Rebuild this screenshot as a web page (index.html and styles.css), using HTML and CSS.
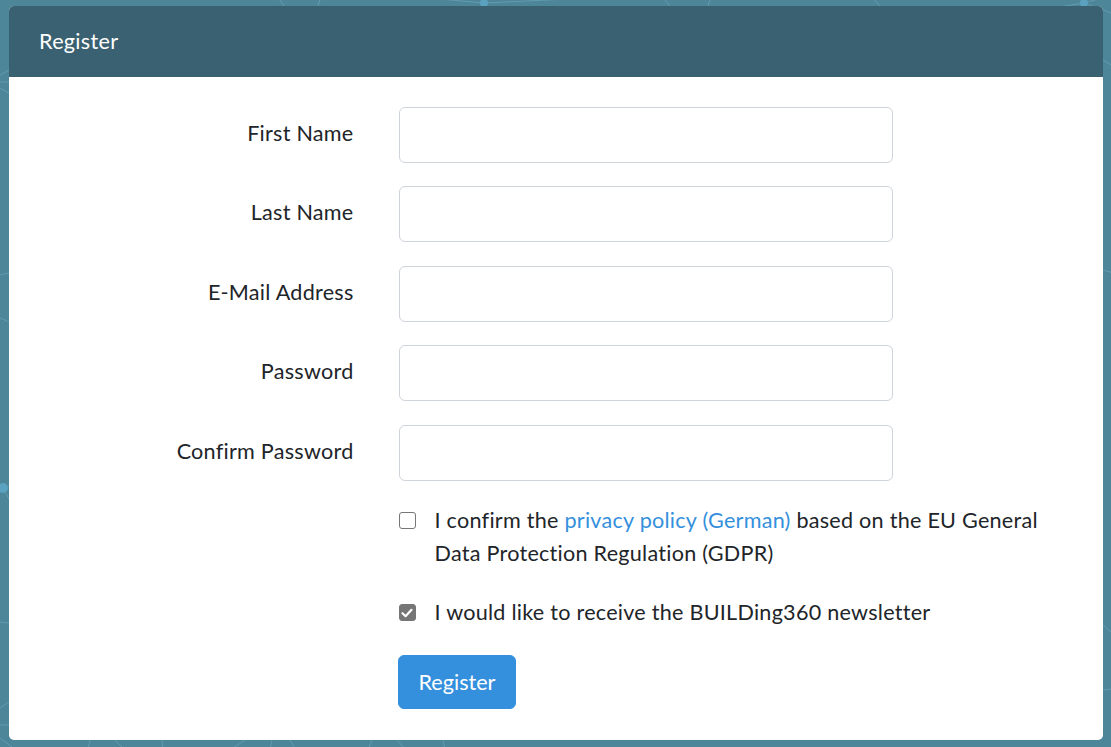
FILE: index.html
```html
<!DOCTYPE html>
<html lang="en">
<head>
<meta charset="utf-8">
<title>Register</title>
<link rel="stylesheet" href="styles.css">
</head>
<body>
<svg class="network" width="1111" height="747" viewBox="0 0 1111 747" aria-hidden="true">
  <g stroke="#6aa6bb" stroke-width="1" fill="none" opacity="0.7">
    <line x1="484" y1="3" x2="230" y2="-20"/>
    <line x1="484" y1="3" x2="760" y2="-10"/>
    <line x1="284" y1="6" x2="260" y2="-30"/>
    <line x1="318" y1="6" x2="330" y2="-30"/>
    <line x1="670" y1="6" x2="640" y2="-30"/>
    <line x1="708" y1="6" x2="720" y2="-30"/>
    <line x1="880" y1="6" x2="850" y2="-30"/>
    <line x1="1084" y1="3" x2="1040" y2="10"/>
    <line x1="1084" y1="3" x2="1130" y2="-10"/>
    <line x1="1084" y1="3" x2="1130" y2="20"/>
    <line x1="3" y1="488" x2="-20" y2="460"/>
    <line x1="3" y1="488" x2="30" y2="480"/>
    <line x1="3" y1="488" x2="20" y2="520"/>
    <line x1="0" y1="75" x2="9" y2="70"/>
    <line x1="0" y1="82" x2="9" y2="82"/>
    <line x1="0" y1="88" x2="9" y2="93"/>
    <line x1="0" y1="275" x2="9" y2="273"/>
    <line x1="0" y1="318" x2="9" y2="322"/>
    <line x1="0" y1="622" x2="9" y2="623"/>
    <line x1="0" y1="708" x2="9" y2="702"/>
    <line x1="0" y1="725" x2="9" y2="725"/>
    <line x1="0" y1="738" x2="12" y2="747"/>
    <line x1="88" y1="750" x2="90" y2="740"/>
    <line x1="115" y1="740" x2="125" y2="750"/>
    <line x1="162" y1="740" x2="163" y2="750"/>
    <line x1="245" y1="740" x2="230" y2="750"/>
    <line x1="272" y1="740" x2="270" y2="750"/>
    <line x1="290" y1="740" x2="296" y2="750"/>
    <line x1="372" y1="740" x2="368" y2="750"/>
    <line x1="397" y1="740" x2="406" y2="750"/>
    <line x1="443" y1="740" x2="445" y2="750"/>
    <line x1="1103" y1="60" x2="1120" y2="70"/>
    <line x1="1103" y1="270" x2="1120" y2="275"/>
    <line x1="1103" y1="625" x2="1120" y2="640"/>
    <line x1="1103" y1="690" x2="1120" y2="688"/>
  </g>
  <g fill="#5aa2c0">
    <circle cx="484" cy="3" r="4"/>
    <circle cx="1084" cy="3" r="4"/>
    <circle cx="3" cy="488" r="5"/>
  </g>
</svg>

<main class="page">
  <section class="card">
    <header class="card-header">Register</header>
    <div class="card-body">
      <form class="form" onsubmit="return false">
        <div class="row">
          <label class="col-label" for="first">First Name</label>
          <div class="col-field"><input id="first" class="input" type="text"></div>
        </div>
        <div class="row">
          <label class="col-label" for="last">Last Name</label>
          <div class="col-field"><input id="last" class="input" type="text"></div>
        </div>
        <div class="row">
          <label class="col-label" for="email">E-Mail Address</label>
          <div class="col-field"><input id="email" class="input" type="email"></div>
        </div>
        <div class="row">
          <label class="col-label" for="pw">Password</label>
          <div class="col-field"><input id="pw" class="input" type="password"></div>
        </div>
        <div class="row">
          <label class="col-label" for="pw2">Confirm Password</label>
          <div class="col-field"><input id="pw2" class="input" type="password"></div>
        </div>
        <div class="row">
          <div class="col-offset">
            <label class="check">
              <span class="box"></span>
              <span class="check-text">I confirm the <a href="#" class="link">privacy policy (German)</a> based on the EU General Data Protection Regulation (GDPR)</span>
            </label>
          </div>
        </div>
        <div class="row row-newsletter">
          <div class="col-offset">
            <label class="check">
              <span class="box checked"><svg width="12" height="10" viewBox="0 0 12 10"><path d="M1.5 5.2 L4.6 8.2 L10.5 1.8" stroke="#fff" stroke-width="2.2" fill="none" stroke-linecap="round" stroke-linejoin="round"/></svg></span>
              <span class="check-text">I would like to receive the BUILDing360 newsletter</span>
            </label>
          </div>
        </div>
        <div class="row row-submit">
          <div class="col-offset">
            <button class="btn" type="submit">Register</button>
          </div>
        </div>
      </form>
    </div>
  </section>
</main>
</body>
</html>
```

FILE: styles.css
```css
html, body {
  margin: 0;
  padding: 0;
}

body {
  width: 1111px;
  height: 747px;
  overflow: hidden;
  background: #4d8599;
  font-family: "Lato", "Open Sans", sans-serif;
  font-size: 21.6px;
  line-height: 1.6;
  letter-spacing: 0.25px;
  color: #212529;
  position: relative;
}

.network {
  position: absolute;
  left: 0;
  top: 0;
  z-index: 0;
}

.page {
  position: relative;
  z-index: 1;
  padding: 6px 8px 0 9px;
}

.card {
  background: #fff;
  border-radius: 5px;
  overflow: hidden;
}

.card-header {
  background: #3a6171;
  color: #fff;
  padding: 18px 30px;
  line-height: 34.5px;
  letter-spacing: 0.3px;
}

.card-body {
  padding: 30px 30px 31px;
}

.form {
  display: flex;
  flex-direction: column;
  gap: 23.5px;
}

.row {
  display: grid;
  grid-template-columns: 359.5px 719.5px;
  margin: 0 -22.5px;
}

.row-newsletter {
  margin-top: 2.5px;
}

.row-submit {
  margin-top: 2px;
}

.col-label {
  padding: 9px 22.5px 0;
  text-align: right;
  line-height: 34.5px;
}

.col-field {
  padding: 0 22.5px;
  width: 539.5px;
  box-sizing: border-box;
}

.col-offset {
  grid-column: 2;
  padding: 0 22.5px;
}

.input {
  display: block;
  width: 100%;
  height: 56px;
  box-sizing: border-box;
  border: 1px solid #ced4da;
  border-radius: 6px;
  background: #fff;
  padding: 9px 18px;
  font: inherit;
}

.check {
  display: flex;
  align-items: flex-start;
  gap: 19px;
  line-height: 33px;
}

.box {
  flex: none;
  width: 15px;
  height: 15px;
  margin-top: 8px;
  border: 1px solid #767676;
  border-radius: 3px;
  background: #fff;
  display: flex;
  align-items: center;
  justify-content: center;
}

.box.checked {
  background: #767676;
  border-color: #767676;
}

.check-text {
  max-width: 620px;
}

.link {
  color: #3490dc;
  text-decoration: none;
}

.btn {
  background: #3490dc;
  color: #fff;
  border: 1px solid #3490dc;
  border-radius: 6px;
  font: inherit;
  line-height: 34.5px;
  padding: 9px 20px;
  margin-left: -1px;
  cursor: pointer;
}
```
